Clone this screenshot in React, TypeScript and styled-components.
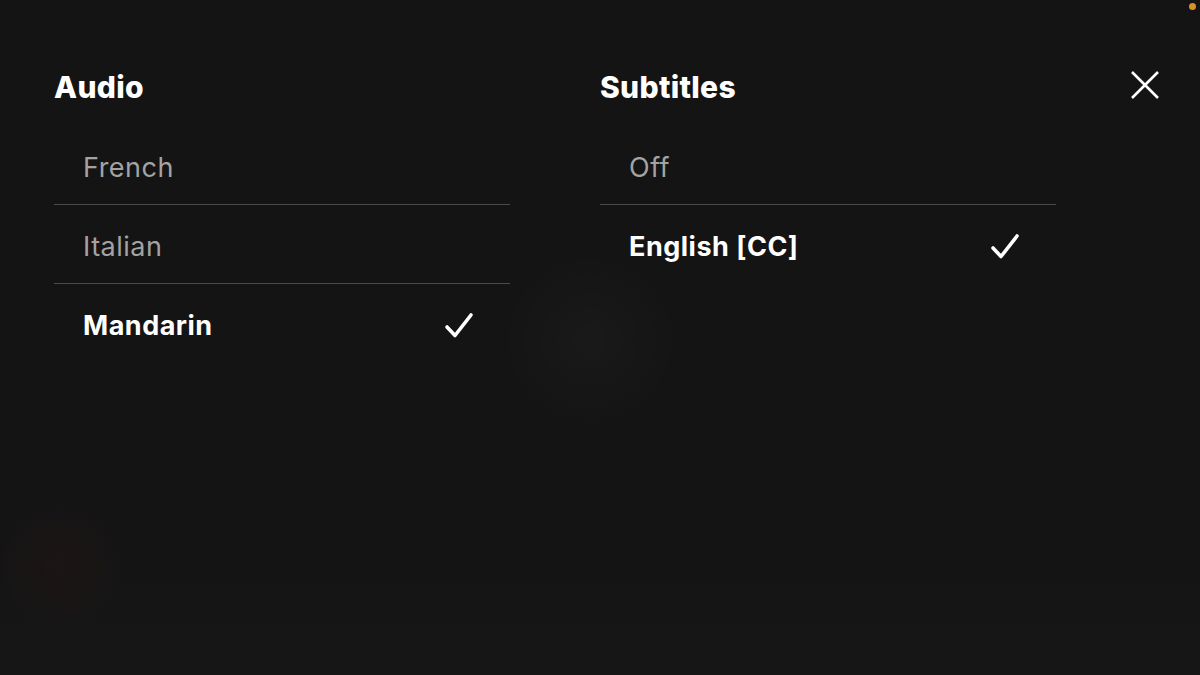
import styled, { createGlobalStyle } from 'styled-components';

const GlobalStyle = createGlobalStyle`
  html, body {
    margin: 0;
    padding: 0;
    background: #141414;
  }
  body {
    font-family: Inter, "Noto Sans", "Liberation Sans", sans-serif;
  }
`;

type Option = { label: string; selected?: boolean };

const audio: Option[] = [
  { label: 'French' },
  { label: 'Italian' },
  { label: 'Mandarin', selected: true },
];

const subtitles: Option[] = [
  { label: 'Off' },
  { label: 'English [CC]', selected: true },
];

const CheckIcon = () => (
  <svg width="30" height="30" viewBox="0 0 30 30" fill="none">
    <path
      d="M3 16 L11 24.5 L27 4"
      stroke="#fff"
      strokeWidth="3.6"
      strokeLinecap="round"
      strokeLinejoin="round"
    />
  </svg>
);

const CloseIcon = () => (
  <svg width="30" height="30" viewBox="0 0 30 30" fill="none">
    <path d="M2 2 L28 28 M28 2 L2 28" stroke="#fff" strokeWidth="2.6" />
  </svg>
);

const Section = ({ title, items }: { title: string; items: Option[] }) => (
  <Column>
    <Heading>{title}</Heading>
    <List>
      {items.map((item) => (
        <Row key={item.label} selected={!!item.selected}>
          <Label>{item.label}</Label>
          {item.selected && <CheckIcon />}
        </Row>
      ))}
    </List>
  </Column>
);

const App = () => {
  return (
    <>
      <GlobalStyle />
      <Screen>
        <RecordDot />
        <Panels>
          <Section title="Audio" items={audio} />
          <Section title="Subtitles" items={subtitles} />
        </Panels>
        <CloseButton aria-label="Close">
          <CloseIcon />
        </CloseButton>
      </Screen>
    </>
  );
};

export default App;

const Screen = styled.div`
  position: relative;
  width: 1200px;
  height: 675px;
  overflow: hidden;
  box-sizing: border-box;
  display: flex;
  justify-content: space-between;
  align-items: flex-start;
  padding: 70px 40px 0 54px;
  background-color: #141414;
  background-image: radial-gradient(
      circle at 590px 340px,
      rgba(255, 255, 255, 0.025) 0,
      rgba(255, 255, 255, 0) 90px
    ),
    radial-gradient(
      circle at 60px 565px,
      rgba(120, 30, 30, 0.08) 0,
      rgba(120, 30, 30, 0) 70px
    ),
    linear-gradient(
      to bottom,
      rgba(255, 255, 255, 0) 560px,
      rgba(255, 255, 255, 0.012) 675px
    );
`;

const Panels = styled.div`
  display: flex;
  gap: 90px;
`;

const Column = styled.div`
  width: 456px;
  display: flex;
  flex-direction: column;
`;

const Heading = styled.h2`
  margin: 0;
  height: 34px;
  line-height: 34px;
  font-size: 30px;
  font-weight: 800;
  color: #fff;
  letter-spacing: 0.3px;
`;

const List = styled.div`
  margin-top: 22px;
  display: flex;
  flex-direction: column;
`;

const Row = styled.div<{ selected: boolean }>`
  height: 79px;
  display: flex;
  align-items: center;
  justify-content: space-between;
  padding: 4px 36px 0 29px;
  box-sizing: border-box;
  font-size: 27px;
  letter-spacing: 0.5px;
  font-weight: ${(p) => (p.selected ? 700 : 400)};
  color: ${(p) => (p.selected ? '#fff' : '#a3a3a3')};
  border-bottom: 1px solid #4a4a4a;

  &:last-child {
    border-bottom: none;
  }
`;

const Label = styled.span`
  white-space: nowrap;
`;

const CloseButton = styled.button`
  width: 30px;
  height: 30px;
  padding: 0;
  border: none;
  background: none;
  cursor: pointer;
  display: flex;
`;

const RecordDot = styled.div`
  position: absolute;
  top: 3px;
  right: 4px;
  width: 7px;
  height: 7px;
  border-radius: 50%;
  background: #d8902c;
`;
